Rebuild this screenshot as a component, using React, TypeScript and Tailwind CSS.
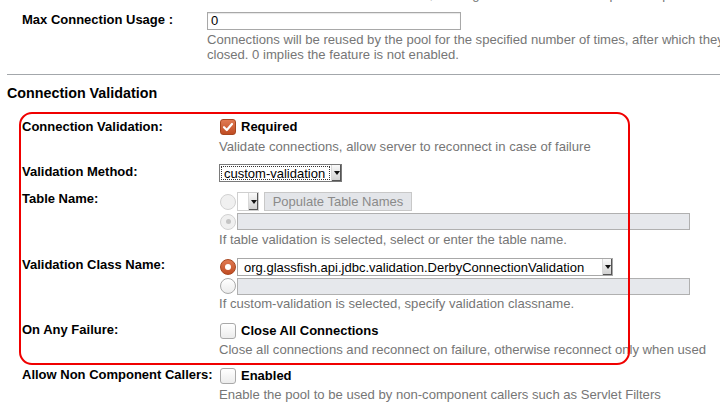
const Check = ({ checked }: { checked?: boolean }) =>
  checked ? (
    <span className="flex h-4 w-4 shrink-0 items-center justify-center rounded-[3px] border border-[#a8461f] bg-gradient-to-b from-[#e07a52] to-[#c04c22]">
      <svg width="12" height="12" viewBox="0 0 12 12">
        <path d="M2 6.2 L4.8 9 L10 3" fill="none" stroke="white" strokeWidth="2.2" strokeLinecap="round" strokeLinejoin="round" />
      </svg>
    </span>
  ) : (
    <span className="h-4 w-4 shrink-0 rounded-[3px] border border-[#a9a9a9] bg-gradient-to-b from-white to-[#ececec]" />
  )

const Radio = ({ checked, disabled }: { checked?: boolean; disabled?: boolean }) => {
  if (checked && !disabled)
    return (
      <span className="flex h-4 w-4 shrink-0 items-center justify-center rounded-full border border-[#a8461f] bg-gradient-to-b from-[#e07a52] to-[#c04c22]">
        <span className="h-[6px] w-[6px] rounded-full bg-white" />
      </span>
    )
  if (disabled)
    return (
      <span className="flex h-4 w-4 shrink-0 items-center justify-center rounded-full border border-[#d2d2d2] bg-[#f0f0f0]">
        {checked && <span className="h-[5px] w-[5px] rounded-full bg-[#c4c4c4]" />}
      </span>
    )
  return <span className="h-4 w-4 shrink-0 rounded-full border border-[#a9a9a9] bg-gradient-to-b from-white to-[#ececec]" />
}

const Arrow = () => (
  <span className="flex h-full w-[10px] shrink-0 items-center justify-center border-l border-[#d8d8d8] bg-gradient-to-b from-[#fafafa] to-[#cfcfcf] shadow-[inset_-1px_-1px_0_#555]">
    <svg width="6" height="4" viewBox="0 0 6 4">
      <path d="M0 0 H6 L3 4 Z" fill="#111" />
    </svg>
  </span>
)

const Help = ({ children, className = '' }: { children: React.ReactNode; className?: string }) => (
  <div className={`h-4 whitespace-nowrap text-[13.1px] leading-4 text-[#767676] ${className}`}>{children}</div>
)

const Label = ({ children, className = '' }: { children: React.ReactNode; className?: string }) => (
  <div className={`w-[197px] shrink-0 whitespace-nowrap text-[13px] font-bold leading-4 text-black ${className}`}>{children}</div>
)

export default function App() {
  return (
    <div className="relative h-[415px] w-[720px] overflow-hidden bg-white font-['Liberation_Sans',Arial,sans-serif] text-black">
      {/* clipped hint from the row above */}
      <div className="ml-[207px] h-[2px] overflow-hidden">
        <div className="-mt-[13px] whitespace-nowrap text-[13px] leading-[15px] text-[#767676]">
          Associate a connection with the thread, reusing it for the thread in the pool setup
        </div>
      </div>

      <div className="mt-[10px] flex pl-[22px]">
        <div className="w-[185px] shrink-0 text-[13px] font-bold leading-4">Max Connection Usage :</div>
        <div>
          <div className="flex h-[18px] w-[254px] items-center border border-[#a8a8a8] bg-white px-[3px] text-[13px] shadow-[inset_0_1px_1px_#e6e6e6]">0</div>
          <div className="mt-[2px] whitespace-nowrap text-[13.1px] leading-[15px] text-[#767676]">
            Connections will be reused by the pool for the specified number of times, after which they will be
            <br />
            closed. 0 implies the feature is not enabled.
          </div>
        </div>
      </div>

      <div className="ml-[7px] mt-[12px] border-t border-[#a3a7ab]" />

      <h2 className="ml-[7px] mt-[9px] text-[14.3px] font-bold leading-[18px]">Connection Validation</h2>

      <div className="pl-[22px]">
        {/* Connection Validation */}
        <div className="mt-[17px] flex">
          <Label>Connection Validation:</Label>
          <div>
            <div className="flex h-4 items-center gap-[5px] pl-[1px]">
              <Check checked />
              <span className="text-[13px] font-bold">Required</span>
            </div>
            <Help className="mt-[4px]">Validate connections, allow server to reconnect in case of failure</Help>
          </div>
        </div>

        {/* Validation Method */}
        <div className="mt-[9px] flex">
          <Label>Validation Method:</Label>
          <div className="flex h-[18px] w-[123px] items-stretch border border-[#7a7a7a] bg-white">
            <span className="m-[1px] flex flex-1 items-center border border-dotted border-[#333] pl-[2px] text-[13px] leading-none">custom-validation</span>
            <Arrow />
          </div>
        </div>

        {/* Table Name */}
        <div className="mt-[10px] flex">
          <Label className="-mt-[1px]">Table Name:</Label>
          <div>
            <div className="flex h-[19px] items-center pl-[1px]">
              <Radio disabled />
              <div className="ml-px flex h-[19px] w-[22px] border border-[#cfcfcf] bg-white">
                <span className="flex-1" />
                <Arrow />
              </div>
              <div className="ml-[5px] flex h-[19px] w-[148px] items-center justify-center border border-[#c8c8c8] bg-[#e3e5e9] text-[13px] text-[#8a8a8a]">
                Populate Table Names
              </div>
            </div>
            <div className="mt-[2px] flex h-[17px] items-center pl-[1px]">
              <Radio disabled checked />
              <div className="ml-px h-[17px] w-[453px] border border-[#b0b0b0] bg-[#e6e8ec]" />
            </div>
            <Help className="mt-[2px]">If table validation is selected, select or enter the table name.</Help>
          </div>
        </div>

        {/* Validation Class Name */}
        <div className="mt-[10px] flex">
          <Label className="-mt-[1px]">Validation Class Name:</Label>
          <div>
            <div className="flex h-[18px] items-center pl-[1px]">
              <Radio checked />
              <div className="ml-px flex h-[18px] w-[376px] border border-[#a8a8a8] bg-white">
                <span className="flex flex-1 items-center pl-[6px] text-[13px] leading-none">
                  org.glassfish.api.jdbc.validation.DerbyConnectionValidation
                </span>
                <Arrow />
              </div>
            </div>
            <div className="mt-[1px] flex h-[18px] items-center pl-[1px]">
              <Radio />
              <div className="ml-px h-[17px] w-[453px] border border-[#b0b0b0] bg-[#e6e8ec]" />
            </div>
            <Help className="mt-[1px]">If custom-validation is selected, specify validation classname.</Help>
          </div>
        </div>

        {/* On Any Failure */}
        <div className="mt-[11px] flex">
          <Label className="-mt-[1px]">On Any Failure:</Label>
          <div>
            <div className="flex h-4 items-center gap-[5px] pl-[1px]">
              <Check />
              <span className="text-[13px] font-bold">Close All Connections</span>
            </div>
            <Help className="mt-[3px]">Close all connections and reconnect on failure, otherwise reconnect only when used</Help>
          </div>
        </div>

        {/* Allow Non Component Callers */}
        <div className="mt-[10px] flex">
          <Label className="-mt-[1px]">Allow Non Component Callers:</Label>
          <div>
            <div className="flex h-4 items-center gap-[5px] pl-[1px]">
              <Check />
              <span className="text-[13px] font-bold">Enabled</span>
            </div>
            <Help className="mt-[3px]">Enable the pool to be used by non-component callers such as Servlet Filters</Help>
          </div>
        </div>
      </div>

      {/* red annotation frame */}
      <div className="pointer-events-none absolute left-[19px] top-[112px] h-[253px] w-[611px] rounded-[13px] border-2 border-[#f00000]" />
    </div>
  )
}
